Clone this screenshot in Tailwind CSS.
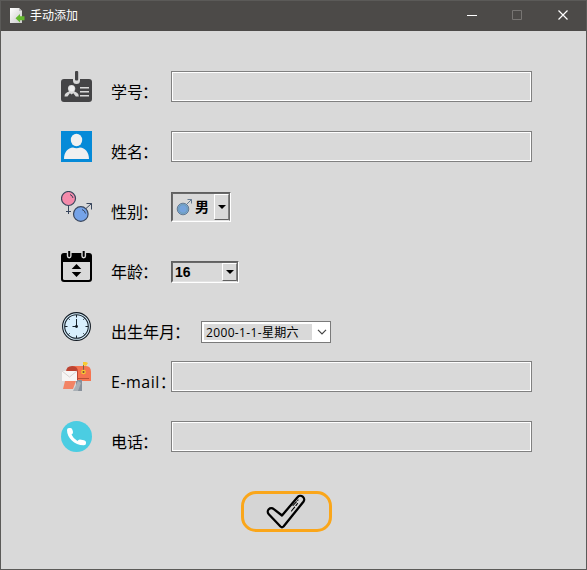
<!DOCTYPE html>
<html lang="zh-CN">
<head>
<meta charset="utf-8">
<title>手动添加</title>
<script src="https://cdn.jsdelivr.net/npm/@tailwindcss/browser@4"></script>
</head>
<body class="w-[587px] h-[570px] overflow-hidden bg-[#d9d9d9] text-black font-['Open_Sans','Noto_Sans_CJK_SC',sans-serif]">
<div class="w-[587px] h-[570px] border border-[#5b5a58] flex flex-col">
  <header class="h-[30px] shrink-0 bg-[#4c4a48] flex items-center text-white">
    <svg class="ml-2 w-4 h-4 shrink-0" viewBox="0 0 16 16">
      <defs><linearGradient id="pg" x2="1" y2="1"><stop offset="0" stop-color="#fff"/><stop offset="1" stop-color="#c9c9c9"/></linearGradient></defs>
      <path d="M1 0h9l3 3v12H1z" fill="url(#pg)"/><path d="M10 0v3h3z" fill="#bbb"/>
      <path d="M6.500 10.300 11 6v2.300h4.500v4H11v2.300z" fill="#63b82e"/>
    </svg>
    <span class="ml-[5px] text-[12px] leading-4">手动添加</span>
    <div class="ml-auto flex">
      <svg class="w-[46px] h-[30px]" viewBox="0 0 46 30" fill="none"><path d="M19 14.500h10" stroke="#fff"/></svg>
      <svg class="w-[46px] h-[30px]" viewBox="0 0 46 30" fill="none"><path d="M18.500 9.500h9v9h-9z" stroke="#777573"/></svg>
      <svg class="w-[46px] h-[30px]" viewBox="0 0 46 30" fill="none"><path d="m18.500 9.500 9 9m0-9-9 9" stroke="#fff" stroke-width="1.200"/></svg>
    </div>
  </header>

  <main class="pt-10 pl-[60px] flex flex-col text-[16px]">
    <div class="h-[60px] flex items-start">
      <svg class="w-[31px] h-[31px]" viewBox="0 0 31 31">
        <path d="M3 8h9v1.500a3.500 3.500 0 0 0 7 0V8h9a3 3 0 0 1 3 3v17a3 3 0 0 1-3 3H3a3 3 0 0 1-3-3V11a3 3 0 0 1 3-3z" fill="#444446"/>
        <rect x="14" y="0" width="3.200" height="9.500" rx="1" fill="#444446"/>
        <path d="M3.500 25.500c0-3 2-4 4.500-5-2-3-1-6.500 2.500-6.500s5 3.500 2.800 6.500c2.700 1 4.500 2 4.500 5h-3l-2.500-3.300-1.700 1.300-1.700-1.300-2.400 3.300zM19 16h9v1.500h-9zM19 20h9v1.500h-9zM19 24h9v1.500h-9z" fill="#d9d9d9"/>
        <ellipse cx="10.800" cy="17.500" rx="2.500" ry="3" fill="#eee"/>
      </svg>
      <span class="ml-[19px] w-[60px] mt-[9px] leading-6 whitespace-nowrap">学号<span class="-ml-px">：</span></span>
      <div class="w-[361px] h-[31px] border border-[#808080] p-px"><div class="h-full outline outline-white"></div></div>
    </div>

    <div class="h-[60px] flex items-start">
      <svg class="w-[31px] h-[31px]" viewBox="0 0 31 31">
        <path d="M0 0h31v31H0z" fill="#058ad8"/><ellipse cx="15.500" cy="9" rx="5.700" ry="6.200" fill="#f0f0f0"/>
        <path d="M3 28c0-7 4-11 9-11.500q3.500 1.500 7 0c5 .5 9 4.500 9 11.500z" fill="#f0f0f0"/>
      </svg>
      <span class="ml-[19px] w-[60px] mt-[9px] leading-6 whitespace-nowrap">姓名<span class="-ml-px">：</span></span>
      <div class="w-[361px] h-[31px] border border-[#808080] p-px"><div class="h-full outline outline-white"></div></div>
    </div>

    <div class="h-[60px] flex items-start">
      <svg class="w-[31px] h-[31px]" viewBox="0 0 31 31" fill="none" stroke="#39465c">
        <circle cx="7.500" cy="7.500" r="7" fill="#f48bab" stroke-width="1.200"/><path d="M9 3.500q2.500 1 3 3.500M7.500 15v8M5 20.500h5"/>
        <circle cx="19.800" cy="23" r="7.300" fill="#75a3e8" stroke-width="1.200"/><path d="M21 18.500q3 1 3.500 4M25 17.500l5.500-5M25.500 12.500h5v6"/>
      </svg>
      <span class="ml-[19px] w-[60px] mt-[9px] leading-6 whitespace-nowrap">性别<span class="-ml-px">：</span></span>
      <div class="mt-px w-[60px] h-[30px] border border-t-[#606060] border-l-[#606060] border-r-white border-b-white"><div class="h-full border border-[#696969] border-b-[#e3e3e3] flex">
        <svg class="mt-[3px] ml-[3px] w-[17px] h-[19px]" viewBox="0 0 17 19" fill="none" stroke="#667b91">
          <circle cx="7" cy="12" r="5.800" fill="#75a3dc"/><circle cx="7" cy="12" r="4.300" stroke="#6c9b9e" stroke-width=".7"/><path d="m11 7 4.500-4.500M11.500 2.500h4v4"/>
        </svg>
        <span class="ml-[2px] mt-[4px] text-[14px] leading-[18px] font-bold">男</span>
        <div class="ml-auto w-[15px] h-[26px] border border-t-white border-l-white border-r-[#808080] border-b-[#606060] flex items-center justify-center">
          <svg class="w-2 h-1" viewBox="0 0 8 4"><path d="M0 0h8L4 4z"/></svg>
        </div>
      </div></div>
    </div>

    <div class="h-[60px] flex items-start">
      <svg class="w-[31px] h-[31px]" viewBox="0 0 31 31">
        <path d="M3 2h25a3 3 0 0 1 3 3v23a3 3 0 0 1-3 3H3a3 3 0 0 1-3-3V5a3 3 0 0 1 3-3z"/>
        <path d="M2 11h27v16.500a1.500 1.500 0 0 1-1.500 1.500h-24A1.500 1.500 0 0 1 2 27.500z" fill="#d9d9d9"/>
        <path d="M6.500 0v5a1.700 1.700 0 0 0 3.400 0V0M21 0v5a1.700 1.700 0 0 0 3.400 0V0" fill="#000" stroke="#d9d9d9" stroke-width="1.400"/>
        <path d="m15.500 13 4.800 5h-9.600zM15.500 26l4.800-5h-9.600z"/>
      </svg>
      <span class="ml-[19px] w-[60px] mt-[9px] leading-6 whitespace-nowrap">年龄<span class="-ml-px">：</span></span>
      <div class="mt-[10px] w-[68px] h-[22px] border border-t-[#606060] border-l-[#606060] border-r-white border-b-white"><div class="h-full border border-[#696969] border-b-[#e3e3e3] flex">
        <span class="ml-[2px] text-[14px] leading-[18px] font-bold font-['Liberation_Sans',sans-serif]">16</span>
        <div class="ml-auto w-[15px] h-[18px] border border-t-white border-l-white border-r-[#808080] border-b-[#606060] flex items-center justify-center">
          <svg class="w-2 h-1" viewBox="0 0 8 4"><path d="M0 0h8L4 4z"/></svg>
        </div>
      </div></div>
    </div>

    <div class="h-[50px] flex items-start">
      <svg class="w-[31px] h-[31px]" viewBox="0 0 31 31" fill="none">
        <circle cx="15.500" cy="15.500" r="13.900" fill="#d8effd" stroke="#101820" stroke-width="1.100"/>
        <circle cx="15.500" cy="15.500" r="11.800" stroke="#17232d" stroke-width="1.100"/>
        <path d="M15.500 4v2.500M15.500 24.500V27M4 15.500h2.500M24.500 15.500H27M7.500 7.500l1.200 1.200M23.500 7.500l-1.200 1.200M7.500 23.500l1.200-1.200M23.500 23.500l-1.200-1.200M15.500 8v7.500h-4" stroke="#17232d"/>
        <circle cx="15.500" cy="15.500" r="1.400" fill="#101820"/>
      </svg>
      <span class="ml-[19px] w-[90px] mt-[9px] leading-6 whitespace-nowrap">出生年月<span class="-ml-px">：</span></span>
      <div class="mt-[10px] w-[130px] h-[22px] border border-[#7a7a7a] bg-white flex items-center">
        <div class="ml-[2px] w-[108px] h-4 bg-[#d9d9d9] pl-[2px] text-[12px] leading-[17px] tracking-[0.35px] whitespace-nowrap">2000-1-1-星期六</div>
        <svg class="ml-[5px] w-[10px] h-[6px]" viewBox="0 0 10 6" fill="none"><path d="m1 .8 4 4 4-4" stroke="#444" stroke-width="1.200"/></svg>
      </div>
    </div>

    <div class="h-[60px] flex items-start">
      <svg class="w-[31px] h-[31px]" viewBox="0 0 31 31">
        <path d="M11 5h14q5 0 5 6v9H11z" fill="#f57450"/><path d="M5 11q0-6 6-6t6 6v9H5z" fill="#bd4432"/>
        <path d="M15 19h6v11h-6z" fill="#87909b"/><path d="m12 30 5-10 3 2-3 8z" fill="#a9b0b6"/>
        <path d="M4 20h11l-3 8H2z" fill="#f28465"/><path d="M1 10h15v10H1z" fill="#f7f5f4"/><path d="m1 10 7.500 6 7.500-6" fill="none" stroke="#d7d2d0"/>
        <path d="M17 17.500h11" stroke="#b94e36"/><path d="M22.500 2v9" stroke="#825e43"/><path d="M22 1h3l2 1-2 3-3-1z" fill="#f8ca31"/><circle cx="22.500" cy="11" r="1.700" fill="#704b40" stroke="#f8ca31" stroke-width="1.300"/>
      </svg>
      <span class="ml-[19px] w-[60px] mt-[9px] leading-6 whitespace-nowrap"><span class="tracking-[0.5px]">E-mail</span>：</span>
      <div class="w-[361px] h-[31px] border border-[#808080] p-px"><div class="h-full outline outline-white"></div></div>
    </div>

    <div class="h-[70px] flex items-start">
      <svg class="w-[31px] h-[31px]" viewBox="0 0 31 31">
        <circle cx="15.500" cy="15.500" r="15.500" fill="#4bcde2"/>
        <path d="M6 9q0-2 2-2h1.500q1.500 0 2 2l.5 2q.3 1.500-1.500 2.500 2 4.500 6 6.500 1-1.700 2.500-1.500l4 .8q2 .5 2 2v1q0 2-2 2C13.500 24.500 6 17 6 9z" fill="#fff"/>
      </svg>
      <span class="ml-[19px] w-[60px] mt-[9px] leading-6 whitespace-nowrap">电话<span class="-ml-px">：</span></span>
      <div class="w-[361px] h-[31px] border border-[#808080] p-px"><div class="h-full outline outline-white"></div></div>
    </div>

    <button class="ml-[180px] w-[91px] h-[41px] rounded-[15px] border-[3px] border-[#faa61a] bg-[#d5d5d5] flex items-center justify-center" aria-label="确定">
      <svg class="w-[40px] h-[35px] -ml-[2px]" viewBox="0 0 40 35" fill="none" stroke="#000" stroke-linejoin="round" stroke-linecap="round">
        <path d="M16 21.500 31.500 3.300a3.700 3.700 0 0 1 5.900 4.500L17.500 32.500q-1.500 1.500-3 0L2.800 20.200a3.500 3.500 0 0 1 5-5z" stroke-width="2.300"/>
        <path d="m25.500 17 6-7.500M27 11.500l5-5.500" stroke-width="1.100" stroke-dasharray="5 2"/>
      </svg>
    </button>
  </main>
</div>
</body>
</html>
